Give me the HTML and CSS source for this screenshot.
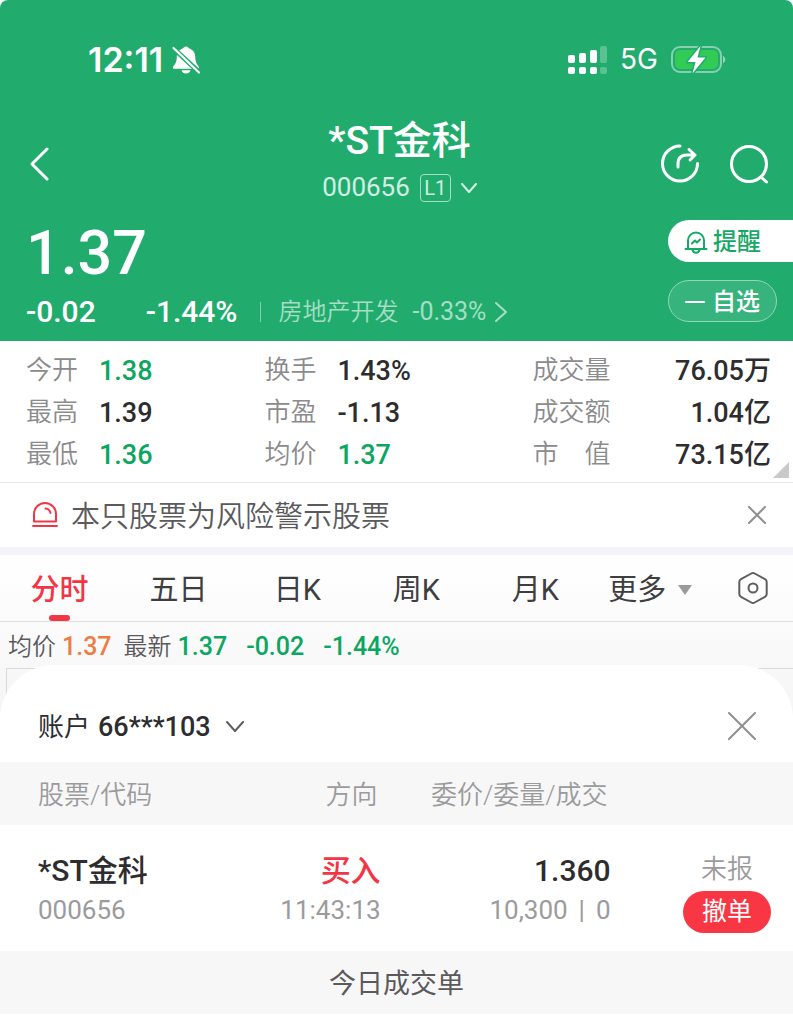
FILE: index.html
```html
<!DOCTYPE html>
<html lang="zh-CN">
<head>
    <meta charset="UTF-8">
    <meta name="viewport" content="width=device-width, initial-scale=1.0">
    <title>*ST金科 000656</title>
    <link rel="stylesheet" href="styles.css">
</head>
<body>
    <header class="quote">
        <div class="status-bar">
            <div class="status-left">
                <span class="clock">12:11</span>
                <svg class="mute" width="30" height="30" viewBox="0 0 30 30">
                    <path fill="#fff" d="M15 1.500c1.300 0 2.300.7 2.700 1.800 4 1 6.300 4.200 6.500 8.200.2 4.500.8 6.500 3 9.300.6.800 1 1.800.6 2.900H2.200c-.6-1.200-.2-2.300.6-3.100 2.300-2.600 2.900-4.600 3-9.100.2-4 2.500-7.200 6.500-8.200C12.700 2.200 13.700 1.500 15 1.500zM10.500 25.200h9c-.5 2-2.200 3.300-4.500 3.300s-4-1.300-4.500-3.300z"/>
                    <path stroke="#21ac6e" stroke-width="5" d="M2 3l27 25"/>
                    <path stroke="#fff" stroke-width="2.200" d="M2.500 3l25.500 24.500"/>
                </svg>
            </div>
            <div class="status-right">
                <svg class="signal" width="39" height="28" viewBox="0 0 39 28">
                    <rect x="0" y="9" width="7" height="8" rx="2"/>
                    <rect x="11" y="7" width="7" height="10" rx="2"/>
                    <rect x="22" y="4" width="7" height="13" rx="2"/>
                    <rect x="0" y="21" width="7" height="7" rx="2"/>
                    <rect x="11" y="21" width="7" height="7" rx="2"/>
                    <rect x="22" y="21" width="7" height="7" rx="2"/>
                    <g opacity=".25">
                        <rect x="32" y="0" width="7" height="17" rx="2"/>
                        <rect x="32" y="21" width="7" height="7" rx="2"/>
                    </g>
                </svg>
                <span class="network">5G</span>
                <svg width="56" height="30" viewBox="0 0 56 30">
                    <rect x="1" y="2" width="49" height="25" rx="8" fill="none" stroke="#fff" stroke-opacity=".45" stroke-width="2"/>
                    <rect x="4" y="5" width="43" height="19" rx="5" fill="#32cb55"/>
                    <path d="M52 11c3 1 3 6 0 7z" fill="#fff" opacity=".5"/>
                    <path d="M29.500 1L16.500 17h8L21.500 28.500 34.500 12.500h-8z" fill="#fff" stroke="#21ac6e" stroke-width="3" paint-order="stroke"/>
                </svg>
            </div>
        </div>

        <div class="nav">
            <button class="icon-btn back" aria-label="返回">
                <svg width="20" height="34" viewBox="0 0 20 34"><path d="M17 2L2 17l15 15"/></svg>
            </button>
            <div class="heading">
                <h1>*ST金科</h1>
                <button class="code">
                    <span>000656</span>
                    <span class="level">L1</span>
                    <svg width="16" height="12" viewBox="0 0 16 12"><path d="M1 2l7 8 7-8"/></svg>
                </button>
            </div>
            <div class="nav-actions">
                <button class="icon-btn" aria-label="分享">
                    <svg width="40" height="40" viewBox="0 0 40 40">
                        <path d="M20 2A17.500 17.500 0 1 0 37.500 19.500"/>
                        <path d="M18 23v-3c0-6 3-9 9-9h8M29 5.500l6 5.500-5 5"/>
                    </svg>
                </button>
                <button class="icon-btn" aria-label="搜索">
                    <svg width="40" height="40" viewBox="0 0 40 40">
                        <circle cx="20" cy="20" r="17.500"/>
                        <path d="M32 33l5.500 5"/>
                    </svg>
                </button>
            </div>
        </div>

        <div class="summary">
            <div class="price-block">
                <div class="price">1.37</div>
                <div class="change-row">
                    <span class="change">-0.02</span>
                    <span class="change">-1.44%</span>
                    <a class="sector" href="#">
                        <span>房地产开发</span>
                        <span class="sector-rate">-0.33%</span>
                        <svg width="12" height="20" viewBox="0 0 12 20"><path d="M1 1l10 9-10 9"/></svg>
                    </a>
                </div>
            </div>
            <div class="pills">
                <button class="pill pill-alert">
                    <svg width="24" height="24" viewBox="0 0 24 24">
                        <path d="M1.500 19h21M4 19v-8.500a8 8 0 0 1 16 0V19"/>
                        <path d="M8.500 20c.5 2 1.800 2.800 3.500 2.800s3-.8 3.500-2.800M8 13.500l3-3 2 2 3-3"/>
                    </svg>
                    提醒
                </button>
                <button class="pill pill-watch">
                    <svg width="20" height="24" viewBox="0 0 20 24"><path d="M1 12h18"/></svg>
                    自选
                </button>
            </div>
        </div>
    </header>

    <dl class="stats">
        <div><dt>今开</dt><dd class="down">1.38</dd></div>
        <div><dt>换手</dt><dd>1.43%</dd></div>
        <div class="wide"><dt>成交量</dt><dd>76.05万</dd></div>
        <div><dt>最高</dt><dd>1.39</dd></div>
        <div><dt>市盈</dt><dd>-1.13</dd></div>
        <div class="wide"><dt>成交额</dt><dd>1.04亿</dd></div>
        <div><dt>最低</dt><dd class="down">1.36</dd></div>
        <div><dt>均价</dt><dd class="down">1.37</dd></div>
        <div class="wide"><dt>市　值</dt><dd>73.15亿</dd></div>
    </dl>

    <div class="warning">
        <svg width="26" height="26" viewBox="0 0 26 26">
            <path d="M2 19.500V12a11 11 0 0 1 22 0v7.500zM1 24h24M13.500 6.500c3 .3 4.500 2 5 4.500"/>
        </svg>
        <p>本只股票为风险警示股票</p>
        <button class="close" aria-label="关闭提示">
            <svg width="18" height="18" viewBox="0 0 18 18"><path d="M1 1l16 16M17 1L1 17"/></svg>
        </button>
    </div>

    <nav class="tabs">
        <a class="active" href="#">分时</a>
        <a href="#">五日</a>
        <a href="#">日K</a>
        <a href="#">周K</a>
        <a href="#">月K</a>
        <a class="more" href="#">更多<svg class="caret" width="14" height="10" viewBox="0 0 14 10"><path d="M0 0h14L7 10z"/></svg></a>
        <button class="settings" aria-label="设置">
            <svg width="32" height="34" viewBox="0 0 32 34">
                <path d="M14.300 2.500a3.400 3.400 0 0 1 3.400 0L28 8.200a3.400 3.400 0 0 1 1.700 3v11.600a3.400 3.400 0 0 1-1.700 3l-10.300 5.700a3.400 3.400 0 0 1-3.400 0L4 25.800a3.400 3.400 0 0 1-1.700-3V11.200a3.400 3.400 0 0 1 1.700-3z"/>
                <circle cx="16" cy="17" r="4.500"/>
            </svg>
        </button>
    </nav>

    <section class="chart">
        <div class="legend">
            <span>均价</span><span class="num avg">1.37</span>
            <span class="latest">最新</span><span class="num down">1.37</span>
            <span class="num down delta">-0.02</span>
            <span class="num down delta">-1.44%</span>
        </div>
        <div class="plot"></div>
    </section>

    <section class="sheet">
        <div class="sheet-head">
            <button class="account">
                账户 <span class="num">66***103</span>
                <svg width="18" height="12" viewBox="0 0 18 12"><path d="M1 1l8 9 8-9"/></svg>
            </button>
            <button class="close" aria-label="关闭">
                <svg width="28" height="28" viewBox="0 0 28 28"><path d="M1 1l26 26M27 1L1 27"/></svg>
            </button>
        </div>
        <table class="orders">
            <thead>
                <tr>
                    <th class="col-name">股票/代码</th>
                    <th class="col-side">方向</th>
                    <th class="col-price">委价/委量/成交</th>
                    <th class="col-state"></th>
                </tr>
            </thead>
            <tbody>
                <tr>
                    <td class="col-name">
                        <div class="main">*ST金科</div>
                        <div class="sub">000656</div>
                    </td>
                    <td class="col-side">
                        <div class="main buy">买入</div>
                        <div class="sub">11:43:13</div>
                    </td>
                    <td class="col-price">
                        <div class="main">1.360</div>
                        <div class="sub">10,300<span class="bar">|</span>0</div>
                    </td>
                    <td class="col-state">
                        <div class="state">
                            <span>未报</span>
                            <button class="cancel">撤单</button>
                        </div>
                    </td>
                </tr>
            </tbody>
        </table>
        <a class="deals" href="#">今日成交单</a>
    </section>
</body>
</html>
```
FILE: styles.css
```css
* {
    box-sizing: border-box;
}
body {
    margin: 0;
    background: #ffffff;
    color: #2d2d2f;
    font-family: Roboto, "Noto Sans CJK SC", sans-serif;
    font-size: 26px;
    line-height: 1.2;
}
h1, p, dl, dd {
    margin: 0;
}
button {
    padding: 0;
    border: none;
    background: none;
    color: inherit;
    font: inherit;
    cursor: pointer;
}
a {
    color: inherit;
    text-decoration: none;
}
svg {
    display: block;
    flex: none;
    fill: none;
    stroke-linecap: round;
    stroke-linejoin: round;
}
.down {
    color: #0ba661;
}
.num {
    font-weight: 500;
}

/* header */
.quote {
    background: #21ac6e;
    color: #ffffff;
    border-radius: 8px 8px 0 0;
    padding-bottom: 5px;
}
.status-bar {
    display: flex;
    justify-content: space-between;
    align-items: center;
    height: 120px;
    padding: 0 66px 0 88px;
    font-family: Inter, sans-serif;
}
.status-left, .status-right {
    display: flex;
    align-items: center;
}
.status-left {
    gap: 8px;
}
.status-right {
    gap: 13px;
}
.clock {
    font-size: 34px;
    font-weight: 600;
}
.signal {
    fill: #ffffff;
}
.network {
    font-size: 28px;
}
.nav {
    display: grid;
    grid-template-columns: 1fr auto 1fr;
    align-items: center;
    height: 88px;
    padding: 0 24px 0 30px;
}
.icon-btn svg {
    stroke: #ffffff;
    stroke-width: 3;
}
.back {
    justify-self: start;
}
.heading {
    display: flex;
    flex-direction: column;
    align-items: center;
}
.heading h1 {
    margin-bottom: 6px;
    font-size: 39px;
    font-weight: 500;
    line-height: 42px;
}
.code {
    display: flex;
    align-items: center;
    gap: 10px;
    height: 40px;
    font-size: 26px;
    color: #d3eee2;
}
.code svg {
    stroke: #d3eee2;
    stroke-width: 2;
}
.level {
    width: 31px;
    border: 1px solid #a6dec5;
    border-radius: 4px;
    font-size: 20px;
    line-height: 26px;
}
.nav-actions {
    display: flex;
    justify-content: flex-end;
    gap: 29px;
}
.summary {
    display: flex;
    justify-content: space-between;
    padding: 12px 0 0 26px;
}
.price {
    font-size: 61px;
    font-weight: 500;
    line-height: 66px;
}
.change-row {
    display: flex;
    align-items: center;
    height: 48px;
    margin-top: 2px;
}
.change {
    margin-right: 50px;
    font-size: 30px;
    font-weight: 500;
}
.change + .change {
    margin-right: 23px;
}
.sector {
    display: flex;
    align-items: center;
    color: #a6dec5;
    font-size: 24px;
    font-weight: 350;
}
.sector::before {
    content: "";
    width: 1px;
    height: 20px;
    margin-right: 17px;
    background: #7dceaa;
}
.sector-rate {
    margin: 0 9px 0 14px;
    font-size: 25px;
    font-weight: 400;
}
.sector svg {
    stroke: #a6dec5;
    stroke-width: 2;
}
.pills {
    display: flex;
    flex-direction: column;
    gap: 18px;
    width: 125px;
}
.pill {
    display: flex;
    align-items: center;
    height: 42px;
    padding: 2px 0 0 16px;
    font-size: 24px;
    font-weight: 500;
}
.pill-alert {
    gap: 5px;
    border-radius: 21px 0 0 21px;
    background: #ffffff;
    color: #16a867;
}
.pill-alert svg {
    stroke: #16a867;
    stroke-width: 2;
}
.pill-watch {
    gap: 7px;
    width: 109px;
    border: 1px solid #90d6b7;
    border-radius: 21px;
    background: #37b47d;
}
.pill-watch svg {
    stroke: #ffffff;
    stroke-width: 2;
}

/* stats */
.stats {
    position: relative;
    display: grid;
    grid-template-columns: 32% 36% 32%;
    padding: 9px 22px 6px 26px;
    border-bottom: 1px solid #ebebed;
}
.stats div {
    display: flex;
    align-items: center;
    height: 42px;
}
.stats dt {
    width: 73px;
    color: #8b8b8d;
    font-size: 26px;
    font-weight: 350;
}
.stats dd {
    font-size: 27px;
    font-weight: 500;
}
.stats .wide {
    justify-content: space-between;
}
.stats .wide dt {
    width: auto;
}
.stats::after {
    content: "";
    position: absolute;
    right: 4px;
    bottom: 4px;
    border-left: 16px solid transparent;
    border-bottom: 16px solid #c9c9cb;
}

/* risk warning */
.warning {
    display: flex;
    align-items: center;
    gap: 13px;
    height: 72px;
    padding: 0 27px 0 32px;
    border-bottom: 8px solid #f3f3f9;
    color: #5a5a5c;
    font-size: 29px;
    font-weight: 350;
}
.warning > svg {
    stroke: #f23645;
    stroke-width: 2;
}
.warning p {
    flex: 1;
    padding-top: 4px;
}
.close svg {
    stroke: #8f8f91;
    stroke-width: 2;
}

/* tabs */
.tabs {
    display: grid;
    grid-template-columns: repeat(6, 3fr) 2fr;
    height: 67px;
    border-bottom: 1px solid #dfdfe1;
    background: linear-gradient(#ffffff, #fbfbfc);
    color: #3e3e40;
    font-size: 29px;
}
.tabs a {
    position: relative;
    display: flex;
    align-items: center;
    justify-content: center;
    padding-top: 4px;
}
.tabs .active {
    color: #f23645;
    font-weight: 500;
}
.tabs .active::after {
    content: "";
    position: absolute;
    bottom: 0;
    width: 21px;
    height: 6px;
    border-radius: 3px;
    background: #f23645;
}
.tabs .more {
    padding-right: 8px;
}
.caret {
    margin-left: 12px;
    fill: #9a9a9c;
}
.settings {
    display: flex;
    align-items: center;
    justify-content: center;
}
.settings svg {
    stroke: #5e5e60;
    stroke-width: 2;
}

/* chart, mostly under the sheet */
.chart {
    background: linear-gradient(#fbfbfc, #f4f4f5);
}
.legend {
    display: flex;
    align-items: center;
    height: 46px;
    padding: 4px 0 0 8px;
    color: #5a5a5c;
    font-size: 24px;
    font-weight: 350;
}
.legend .num {
    margin-left: 6px;
    font-size: 25px;
}
.legend .avg {
    color: #ee7c43;
}
.legend .latest {
    margin-left: 12px;
}
.legend .delta {
    margin-left: 19px;
}
.plot {
    height: 60px;
    margin-left: 6px;
    border: 1px solid #d9d9db;
    border-width: 1px 0 0 1px;
}

/* order sheet */
.sheet {
    position: relative;
    margin-top: -63px;
    border-radius: 54px 54px 0 0;
    background: #ffffff;
}
.sheet-head {
    display: flex;
    align-items: center;
    justify-content: space-between;
    height: 97px;
    padding: 24px 37px 0 38px;
}
.account {
    display: flex;
    align-items: center;
    gap: 8px;
    padding-top: 4px;
    font-size: 26px;
}
.account .num {
    font-size: 27px;
}
.account svg {
    margin-left: 7px;
    stroke: #5e5e60;
    stroke-width: 2;
}
.orders {
    width: 100%;
    border-collapse: collapse;
    table-layout: fixed;
    text-align: right;
}
.orders th {
    height: 63px;
    padding: 4px 3px 0 0;
    background: #f7f7f8;
    color: #9b9b9d;
    font-size: 26px;
    font-weight: 350;
}
.orders td {
    height: 126px;
    padding: 4px 0 0;
}
.orders .col-name {
    width: 25%;
    padding-left: 38px;
    text-align: left;
}
.orders .col-side {
    width: 23%;
}
.orders .col-price {
    width: 29%;
}
.main {
    font-size: 30px;
    font-weight: 500;
    line-height: 40px;
}
.buy {
    color: #f23645;
}
.sub {
    color: #9b9b9d;
    font-size: 26px;
    line-height: 38px;
}
.bar {
    margin: 0 11px;
}
.state {
    display: inline-flex;
    flex-direction: column;
    align-items: center;
    margin-right: 22px;
    color: #9b9b9d;
    font-weight: 350;
    line-height: 44px;
}
.cancel {
    width: 88px;
    height: 42px;
    border-radius: 21px;
    background: #f93744;
    color: #ffffff;
    font-size: 25px;
    font-weight: 400;
    line-height: 42px;
}
.deals {
    display: block;
    padding-top: 4px;
    background: #f7f7f8;
    color: #5a5a5c;
    font-size: 27px;
    line-height: 59px;
    text-align: center;
}
```
